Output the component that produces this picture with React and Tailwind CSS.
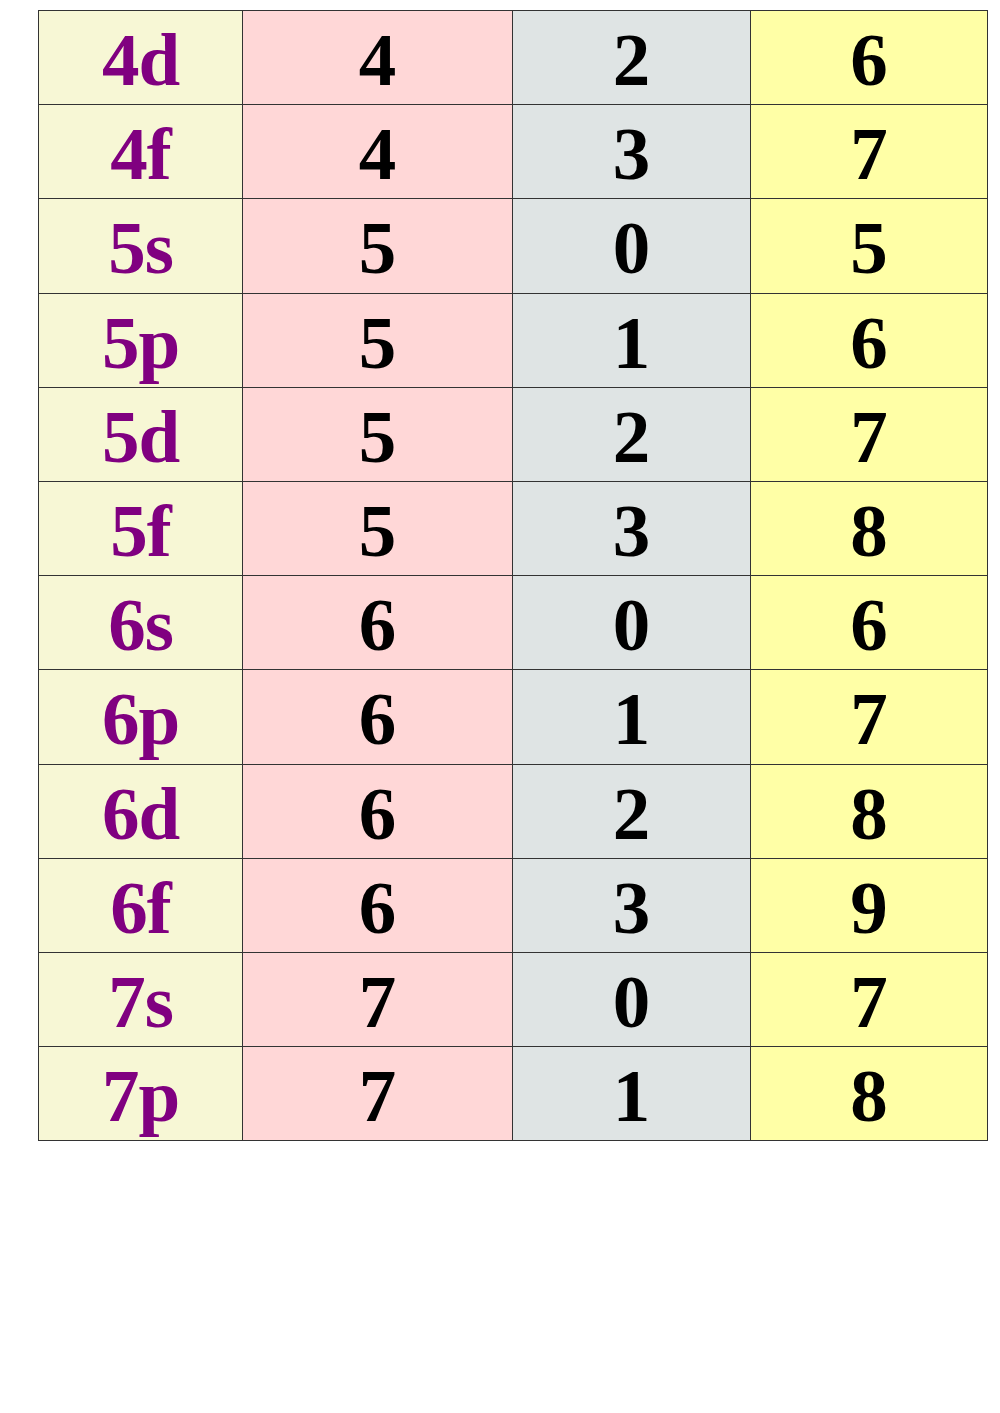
const rows = [
  ['4d', '4', '2', '6'],
  ['4f', '4', '3', '7'],
  ['5s', '5', '0', '5'],
  ['5p', '5', '1', '6'],
  ['5d', '5', '2', '7'],
  ['5f', '5', '3', '8'],
  ['6s', '6', '0', '6'],
  ['6p', '6', '1', '7'],
  ['6d', '6', '2', '8'],
  ['6f', '6', '3', '9'],
  ['7s', '7', '0', '7'],
  ['7p', '7', '1', '8'],
];

const App = () => {
  return (
    <div className="w-[1000px] h-[1413px] bg-white pt-[10px] pl-[38px]" style={{ fontFamily: '"Liberation Serif", serif' }}>
      <div className="grid grid-cols-[204px_270px_238px_237px] border-l border-t border-[#333] w-[950px]">
        {rows.map((r) => (
          <div key={r[0]} className="contents">
            <div className="h-[94.2px] pt-[4px] flex items-center justify-center bg-[#f7f7d5] border-r border-b border-[#333] text-[#800080] text-[75px] font-bold leading-none tracking-[-1px]">
              {r[0]}
            </div>
            <div className="h-[94.2px] pt-[4px] flex items-center justify-center bg-[#ffd7d7] border-r border-b border-[#333] text-black text-[75px] font-bold leading-none">
              {r[1]}
            </div>
            <div className="h-[94.2px] pt-[4px] flex items-center justify-center bg-[#dfe4e4] border-r border-b border-[#333] text-black text-[75px] font-bold leading-none">
              {r[2]}
            </div>
            <div className="h-[94.2px] pt-[4px] flex items-center justify-center bg-[#ffffa6] border-r border-b border-[#333] text-black text-[75px] font-bold leading-none">
              {r[3]}
            </div>
          </div>
        ))}
      </div>
    </div>
  );
};

export default App;
